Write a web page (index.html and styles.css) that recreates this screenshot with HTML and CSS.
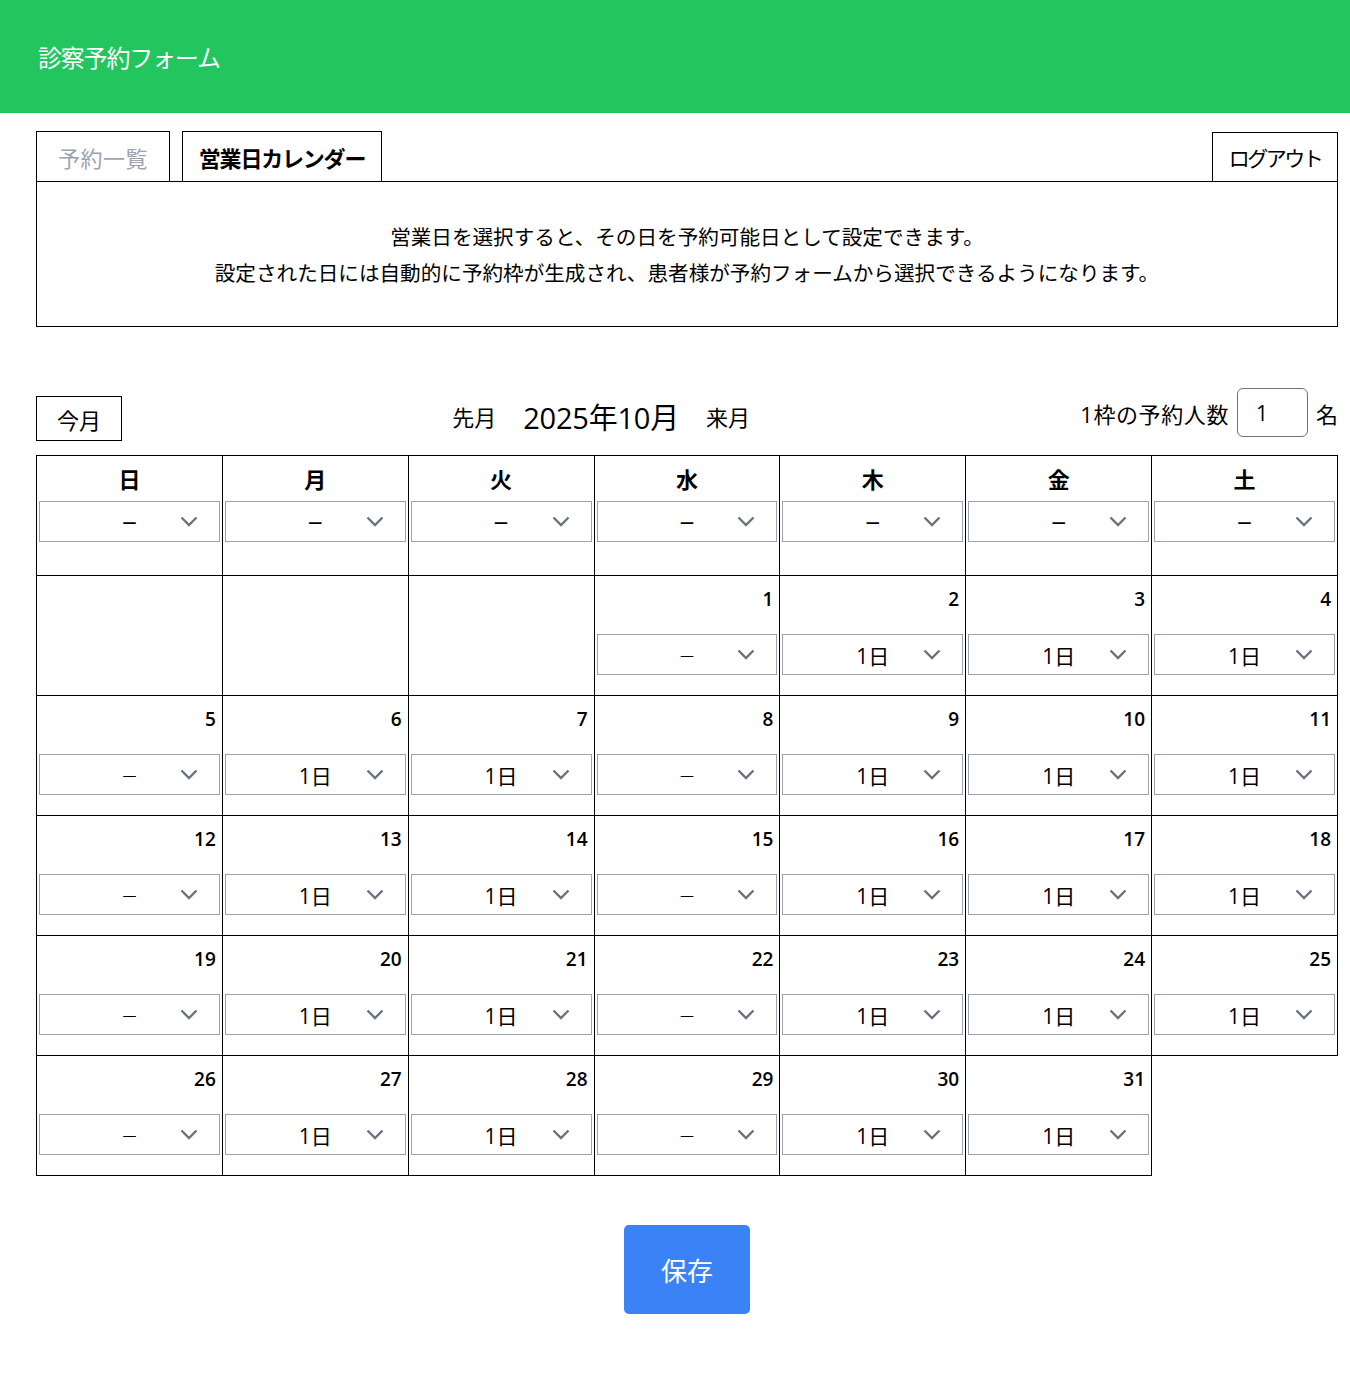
FILE: index.html
```html
<!DOCTYPE html>
<html lang="ja">
<head>
<meta charset="utf-8">
<title>診察予約フォーム</title>
<link rel="stylesheet" href="styles.css">
</head>
<body>
<header class="app-header">
  <h1 class="app-title">診察予約フォーム</h1>
</header>
<main class="main">
  <div class="tabs">
    <button class="tab tab-inactive">予約一覧</button>
    <button class="tab tab-active">営業日カレンダー</button>
    <button class="logout">ログアウト</button>
  </div>
  <div class="info">
    <p>営業日を選択すると、その日を予約可能日として設定できます。</p>
    <p>設定された日には自動的に予約枠が生成され、患者様が予約フォームから選択できるようになります。</p>
  </div>

  <div class="nav">
    <button class="today">今月</button>
    <div class="month-nav">
      <span class="nav-link">先月</span>
      <span class="month">2025年10月</span>
      <span class="nav-link">来月</span>
    </div>
    <div class="capacity">
      <span class="cap-label">1枠の予約人数</span>
      <input class="cap-input" type="text" value="1">
      <span>名</span>
    </div>
  </div>

  <table class="cal" id="cal">
    <thead>
      <tr>
        <th><div class="dow">日</div><div class="sel"><span class="val dash">—</span><svg class="chev" viewBox="0 0 18 11"><path d="M1.5 1.5 L9 9 L16.5 1.5"/></svg></div></th>
        <th><div class="dow">月</div><div class="sel"><span class="val dash">—</span><svg class="chev" viewBox="0 0 18 11"><path d="M1.5 1.5 L9 9 L16.5 1.5"/></svg></div></th>
        <th><div class="dow">火</div><div class="sel"><span class="val dash">—</span><svg class="chev" viewBox="0 0 18 11"><path d="M1.5 1.5 L9 9 L16.5 1.5"/></svg></div></th>
        <th><div class="dow">水</div><div class="sel"><span class="val dash">—</span><svg class="chev" viewBox="0 0 18 11"><path d="M1.5 1.5 L9 9 L16.5 1.5"/></svg></div></th>
        <th><div class="dow">木</div><div class="sel"><span class="val dash">—</span><svg class="chev" viewBox="0 0 18 11"><path d="M1.5 1.5 L9 9 L16.5 1.5"/></svg></div></th>
        <th><div class="dow">金</div><div class="sel"><span class="val dash">—</span><svg class="chev" viewBox="0 0 18 11"><path d="M1.5 1.5 L9 9 L16.5 1.5"/></svg></div></th>
        <th><div class="dow">土</div><div class="sel"><span class="val dash">—</span><svg class="chev" viewBox="0 0 18 11"><path d="M1.5 1.5 L9 9 L16.5 1.5"/></svg></div></th>
      </tr>
    </thead>
    <tbody id="cal-body"></tbody>
  </table>

  <div class="actions">
    <button class="save">保存</button>
  </div>
</main>
<script src="app.js"></script>
</body>
</html>
```

FILE: app.js
```js
(function () {
  var body = document.getElementById('cal-body');
  var first = 3; // 2025-10-01 is Wednesday
  var days = 31;
  var chev = '<svg class="chev" viewBox="0 0 18 11"><path d="M1.5 1.5 L9 9 L16.5 1.5"/></svg>';
  var cells = [];
  for (var i = 0; i < first; i++) cells.push(null);
  for (var d = 1; d <= days; d++) cells.push(d);
  var html = '';
  for (var r = 0; r < cells.length; r += 7) {
    html += '<tr>';
    for (var c = 0; c < 7 && r + c < cells.length; c++) {
      var day = cells[r + c];
      if (day === null) {
        html += '<td></td>';
      } else {
        var off = (c === 0 || c === 3);
        html += '<td><div class="num">' + day + '</div><div class="sel">' +
          (off ? '<span class="val dash">—</span>' : '<span class="val">1日</span>') + chev + '</div></td>';
      }
    }
    html += '</tr>';
  }
  body.innerHTML = html;
})();
```

FILE: styles.css
```css
* { box-sizing: border-box; }

body {
  margin: 0;
  font-family: "Open Sans", "Noto Sans CJK JP", sans-serif;
  color: #000;
  background: #fff;
}

button, input {
  font-family: inherit;
  color: inherit;
  background: #fff;
}

.app-header {
  height: 113px;
  background: #22c55e;
  display: flex;
  align-items: center;
  padding-left: 38px;
}

.app-title {
  margin: 0;
  font-size: 24px;
  font-weight: 400;
  color: #fff;
  letter-spacing: -1.2px;
}

.main {
  padding: 18px 12px 60px 36px;
}

.tabs {
  display: flex;
  gap: 12px;
  align-items: flex-end;
}

.tab {
  height: 50px;
  border: 1px solid #000;
  border-bottom: none;
  font-size: 22px;
  padding: 0;
}

.tab-inactive {
  width: 134px;
  color: #9ca3af;
  letter-spacing: 0.5px;
}

.tab-active {
  width: 200px;
  font-weight: 700;
  letter-spacing: -1.2px;
}

.logout {
  margin-left: auto;
  width: 126px;
  height: 49px;
  border: 1px solid #000;
  border-bottom: none;
  font-size: 21px;
  padding: 0;
  letter-spacing: -2.5px;
}

.info {
  border: 1px solid #000;
  text-align: center;
  font-size: 20.6px;
  line-height: 36px;
  padding: 37px 0 35px;
}

.info p { margin: 0; }

.nav {
  margin-top: 61px;
  display: flex;
  justify-content: space-between;
  align-items: center;
  height: 49px;
}

.today {
  width: 86px;
  height: 45px;
  border: 1px solid #000;
  font-size: 22px;
  padding: 0;
  margin-top: 12px;
}

.month-nav {
  display: flex;
  align-items: center;
  gap: 27px;
  margin-top: 6px;
}

.nav-link { font-size: 22px; }

.month {
  font-size: 29px;
  letter-spacing: -0.2px;
}

.capacity {
  display: flex;
  align-items: center;
  gap: 8px;
  font-size: 22px;
}

.cap-label { letter-spacing: 0.6px; }

.cap-input {
  width: 71px;
  height: 49px;
  border: 1px solid #6b7280;
  border-radius: 6px;
  font-size: 21px;
  padding: 0 0 0 18px;
  outline: none;
}

.cal {
  margin-top: 18px;
  width: 100%;
  table-layout: fixed;
  border-collapse: collapse;
}

.cal th, .cal td {
  border: 1px solid #000;
  height: 120px;
  vertical-align: top;
  padding: 0 2px;
}

.dow {
  font-size: 22px;
  font-weight: 700;
  line-height: 26px;
  padding-top: 10px;
  margin-bottom: 9px;
  text-align: center;
}

.num {
  font-size: 19px;
  font-weight: 600;
  line-height: 22px;
  text-align: right;
  padding: 12px 4px 0 0;
  margin-bottom: 24px;
}

.sel {
  height: 41px;
  border: 1px solid #9ca3af;
  display: grid;
  grid-template-columns: 1fr auto 1fr;
  align-items: center;
  font-size: 21px;
  font-weight: 400;
}

.val {
  grid-column: 2;
  text-align: center;
}

.dash {
  font-family: "DejaVu Sans", sans-serif;
  font-size: 14px;
  font-weight: 400;
}

th .dash { font-weight: 700; }

.chev {
  grid-column: 3;
  justify-self: end;
  width: 18px;
  height: 11px;
  margin-right: 21px;
  fill: none;
  stroke: #6b7280;
  stroke-width: 2.4;
}

.actions {
  display: flex;
  justify-content: center;
  margin-top: 49px;
}

.save {
  width: 126px;
  height: 89px;
  border: none;
  border-radius: 5px;
  background: #3b82f6;
  color: #fff;
  font-size: 26px;
  padding: 0;
}
```
